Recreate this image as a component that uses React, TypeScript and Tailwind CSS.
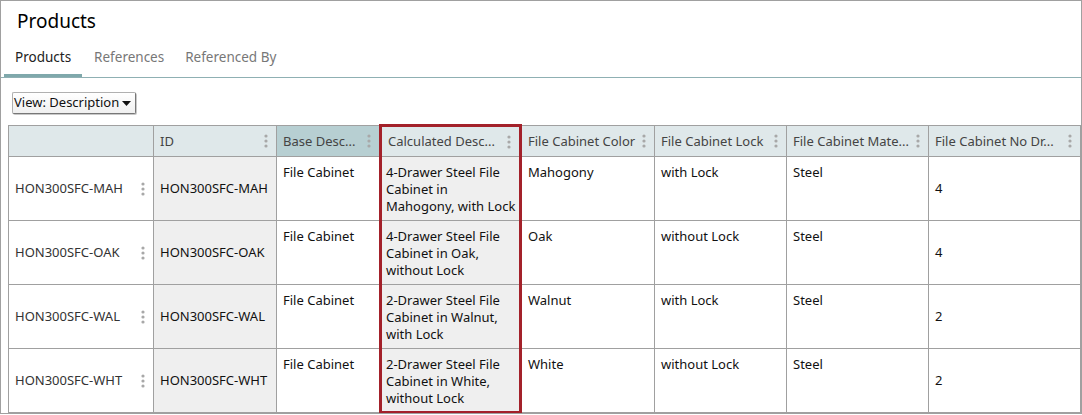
const rows = [
  { sku: "HON300SFC-MAH", desc: ["4-Drawer Steel File", "Cabinet in", "Mahogony, with Lock"], color: "Mahogony", lock: "with Lock", drawers: "4" },
  { sku: "HON300SFC-OAK", desc: ["4-Drawer Steel File", "Cabinet in Oak,", "without Lock"], color: "Oak", lock: "without Lock", drawers: "4" },
  { sku: "HON300SFC-WAL", desc: ["2-Drawer Steel File", "Cabinet in Walnut,", "with Lock"], color: "Walnut", lock: "with Lock", drawers: "2" },
  { sku: "HON300SFC-WHT", desc: ["2-Drawer Steel File", "Cabinet in White,", "without Lock"], color: "White", lock: "without Lock", drawers: "2" },
];

function Kebab() {
  return (
    <svg width="4" height="14" viewBox="0 0 4 14" className="shrink-0">
      <circle cx="2" cy="2" r="1.6" fill="#a8a8a8" />
      <circle cx="2" cy="7" r="1.6" fill="#a8a8a8" />
      <circle cx="2" cy="12" r="1.6" fill="#a8a8a8" />
    </svg>
  );
}

function HeaderCell({ label, width, dark, red }: { label: string; width: number; dark?: boolean; red?: boolean }) {
  return (
    <th
      style={{ width }}
      className={
        "h-[31px] p-0 font-normal text-left align-middle border border-[#a0a0a0] " +
        (dark ? "bg-[#b7cfd2] " : "bg-[#dfe8ea] ") +
        (red ? "border-x-[3px] border-t-[3px] border-x-[#a3212a] border-t-[#a3212a]" : "")
      }
    >
      <div className="flex items-center justify-between pl-[6px] pr-[8px] text-[13px] leading-[17px] text-[#444]">
        <span className="whitespace-nowrap">{label}</span>
        {label !== "" && <Kebab />}
      </div>
    </th>
  );
}

export default function App() {
  const td = "border border-[#a0a0a0] px-[6px] text-[13px] leading-[17px] text-[#111] whitespace-nowrap";
  return (
    <div className="w-[1082px] h-[414px] border border-[#a0a0a0] bg-white overflow-hidden" style={{ fontFamily: "'Noto Sans', 'Liberation Sans', Arial, sans-serif" }}>
      <h1 className="pl-[16px] pt-[8px] text-[19px] leading-[24px] text-black">Products</h1>
      <div className="mt-[15px] flex border-b border-[#8fb0b3] pl-[3px]">
        <div className="px-[11px] pb-[7px] text-[13.5px] leading-[19px] text-[#222] border-b-[3px] border-[#7fa8ab]">Products</div>
        <div className="px-[12px] pb-[7px] text-[13.5px] leading-[19px] text-[#777]">References</div>
        <div className="px-[9px] pb-[7px] text-[13.5px] leading-[19px] text-[#777]">Referenced By</div>
      </div>
      <div className="pl-[11px] pt-[14px]">
        <div className="flex h-[22px] w-[124px] items-center justify-between rounded-[2px] border border-[#b0b0b0] border-r-[#777] border-b-[#777] bg-gradient-to-b from-white to-[#f0f0f0] pl-[1px] pr-[4px] text-[13px] text-[#111] shadow-[1px_1px_0_#c8c8c8]">
          <span className="whitespace-nowrap">View: Description</span>
          <svg width="9" height="5" viewBox="0 0 9 5"><path d="M0 0h9L4.5 5z" fill="#111" /></svg>
        </div>
      </div>
      <table className="ml-[7px] mt-[10px] border-collapse table-fixed" style={{ width: 1072 }}>
        <thead>
          <tr>
            <HeaderCell label="" width={145} />
            <HeaderCell label="ID" width={123} />
            <HeaderCell label="Base Desc..." width={104} dark />
            <HeaderCell label="Calculated Desc..." width={140} red />
            <HeaderCell label="File Cabinet Color" width={134} />
            <HeaderCell label="File Cabinet Lock" width={132} />
            <HeaderCell label="File Cabinet Mate..." width={142} />
            <HeaderCell label="File Cabinet No Dr..." width={152} />
          </tr>
        </thead>
        <tbody>
          {rows.map((r, i) => (
            <tr key={r.sku} className="h-[64px]">
              <td className={td + " align-middle pr-[8px]"}>
                <div className="flex items-center justify-between text-[#333]">
                  <span>{r.sku}</span>
                  <Kebab />
                </div>
              </td>
              <td className={td + " align-middle bg-[#efefef]"}>{r.sku}</td>
              <td className={td + " align-top pt-[7px]"}>File Cabinet</td>
              <td
                className={
                  td +
                  " align-top pt-[7px] pl-[4px] pr-0 bg-[#efefef] border-x-[3px] border-x-[#a3212a]" +
                  (i === rows.length - 1 ? " border-b-[3px] border-b-[#a3212a]" : "")
                }
              >
                {r.desc.map((l) => (
                  <div key={l}>{l}</div>
                ))}
              </td>
              <td className={td + " align-top pt-[7px]"}>{r.color}</td>
              <td className={td + " align-top pt-[7px]"}>{r.lock}</td>
              <td className={td + " align-top pt-[7px]"}>Steel</td>
              <td className={td + " align-middle"}>{r.drawers}</td>
            </tr>
          ))}
        </tbody>
      </table>
    </div>
  );
}
